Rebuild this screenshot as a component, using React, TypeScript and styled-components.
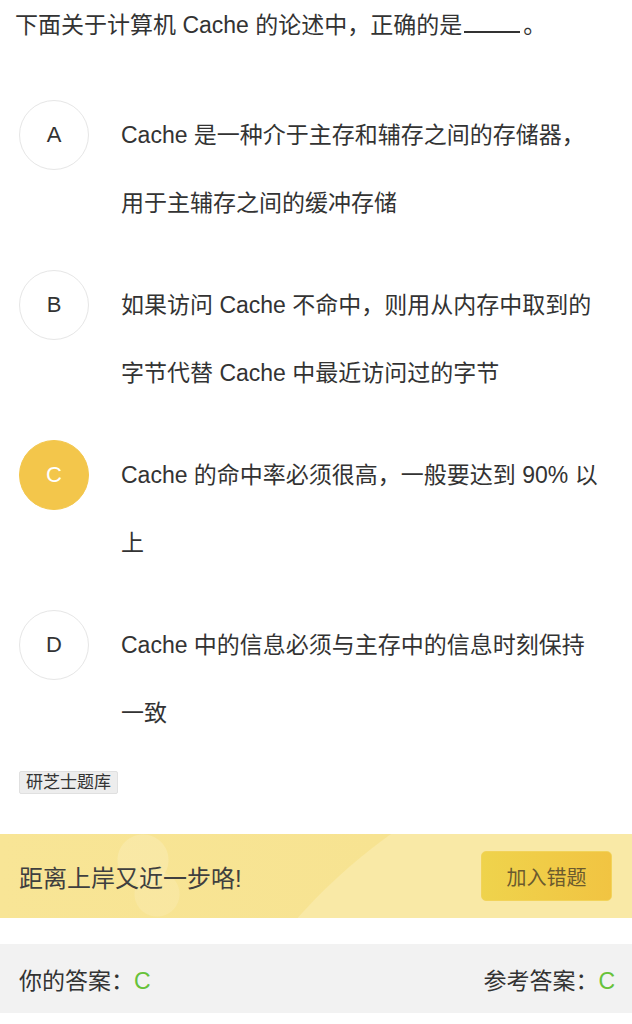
import React from 'react';
import styled, { createGlobalStyle } from 'styled-components';

type OptionType = {
  key: string;
  text: string;
};

const options: OptionType[] = [
  { key: 'A', text: 'Cache 是一种介于主存和辅存之间的存储器，用于主辅存之间的缓冲存储' },
  { key: 'B', text: '如果访问 Cache 不命中，则用从内存中取到的字节代替 Cache 中最近访问过的字节' },
  { key: 'C', text: 'Cache 的命中率必须很高，一般要达到 90% 以上' },
  { key: 'D', text: 'Cache 中的信息必须与主存中的信息时刻保持一致' }
];

const selected = 'C';
const myAnswer = 'C';
const refAnswer = 'C';

function App() {
  return (
    <>
      <GlobalStyle />
      <Page>
        <Question>
          下面关于计算机 Cache 的论述中，正确的是<Blank />。
        </Question>
        <OptionList>
          {options.map((o) => (
            <OptionRow key={o.key}>
              <Letter active={o.key === selected}>{o.key}</Letter>
              <OptionText>{o.text}</OptionText>
            </OptionRow>
          ))}
        </OptionList>
        <Source>研芝士题库</Source>
        <Banner>
          <BannerText>距离上岸又近一步咯!</BannerText>
          <AddButton type="button">加入错题</AddButton>
        </Banner>
        <AnswerBar>
          <AnswerItem>
            你的答案：<Green>{myAnswer}</Green>
          </AnswerItem>
          <AnswerItem>
            参考答案：<Green>{refAnswer}</Green>
          </AnswerItem>
        </AnswerBar>
      </Page>
    </>
  );
}

export default App;

const GlobalStyle = createGlobalStyle`
    * {
        box-sizing: border-box;
    }
    body {
        margin: 0;
        background: #fff;
        font-family: "Liberation Sans", "Noto Sans CJK SC", sans-serif;
        color: #333;
    }
`;

const Page = styled.div`
    width: 632px;
    display: flex;
    flex-direction: column;
`;

const Question = styled.p`
    margin: 0;
    padding: 8px 15px 0;
    font-size: 23px;
    line-height: 34px;
    color: #333;
`;

const Blank = styled.span`
    display: inline-block;
    width: 56px;
    height: 20px;
    margin: 0 3px 0 2px;
    border-bottom: 2px solid #333;
`;

const OptionList = styled.div`
    display: flex;
    flex-direction: column;
    gap: 34px;
    padding: 59px 0 0 19px;
`;

const OptionRow = styled.div`
    display: flex;
    align-items: flex-start;
    gap: 32px;
`;

const Letter = styled.div<{ active: boolean }>`
    flex: none;
    width: 70px;
    height: 70px;
    margin-top: -1px;
    border-radius: 50%;
    display: flex;
    align-items: center;
    justify-content: center;
    font-size: 22px;
    color: ${({ active }) => (active ? '#fff' : '#333')};
    background-color: ${({ active }) => (active ? '#f3c64b' : '#fff')};
    border: 1px solid ${({ active }) => (active ? '#f3c64b' : '#e6e6e6')};
`;

const OptionText = styled.div`
    width: 481px;
    font-size: 23px;
    line-height: 68px;
    color: #333;
`;

const Source = styled.span`
    align-self: flex-start;
    margin: 24px 0 0 19px;
    padding: 0 6px;
    height: 23px;
    line-height: 21px;
    font-size: 17px;
    color: #333;
    background-color: #ededed;
    border: 1px solid #e0e0e0;
    border-radius: 2px;
`;

const Banner = styled.div`
    margin-top: 40px;
    height: 84px;
    padding: 0 20px 0 19px;
    display: flex;
    align-items: center;
    justify-content: space-between;
    background:
        radial-gradient(circle at 143px 26px, rgba(255, 255, 255, 0.16) 0 25px, transparent 26px),
        radial-gradient(circle at 157px 60px, rgba(255, 255, 255, 0.12) 0 22px, transparent 23px),
        radial-gradient(circle at 720px 460px, #f9e9a6 0 565px, transparent 566px),
        linear-gradient(90deg, #f8e596 0%, #f7e391 60%, #f6e08a 100%);
`;

const BannerText = styled.span`
    font-size: 24px;
    color: #3f3f3f;
`;

const AddButton = styled.button`
    width: 131px;
    height: 50px;
    border: 1px solid #f2d35a;
    border-radius: 5px;
    background: linear-gradient(90deg, #efd34c 0%, #f1c442 100%);
    font-family: inherit;
    font-size: 20px;
    color: #6b5a2e;
    cursor: pointer;
`;

const AnswerBar = styled.div`
    margin-top: 26px;
    height: 69px;
    padding: 0 17px 0 19px;
    display: flex;
    align-items: center;
    justify-content: space-between;
    background-color: #f2f2f2;
`;

const AnswerItem = styled.span`
    font-size: 23px;
    color: #333;
`;

const Green = styled.span`
    color: #67c23a;
`;
